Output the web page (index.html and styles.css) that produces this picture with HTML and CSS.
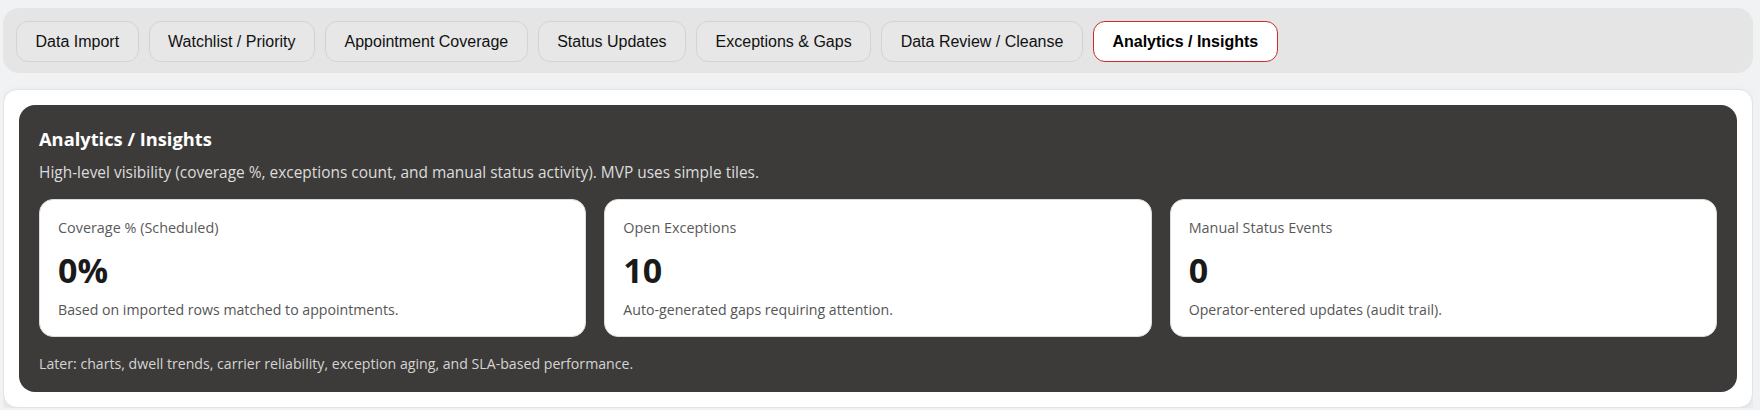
FILE: index.html
```html
<!DOCTYPE html>
<html lang="en">
<head>
<meta charset="utf-8">
<title>Analytics / Insights</title>
<link rel="stylesheet" href="styles.css">
</head>
<body>
  <nav class="tabbar">
    <button class="tab">Data Import</button>
    <button class="tab">Watchlist / Priority</button>
    <button class="tab">Appointment Coverage</button>
    <button class="tab">Status Updates</button>
    <button class="tab">Exceptions &amp; Gaps</button>
    <button class="tab">Data Review / Cleanse</button>
    <button class="tab tab-active">Analytics / Insights</button>
  </nav>
  <main class="panel">
    <section class="dark">
      <h2 class="dark-title">Analytics / Insights</h2>
      <p class="dark-sub">High-level visibility (coverage %, exceptions count, and manual status activity). MVP uses simple tiles.</p>
      <div class="tiles">
        <div class="tile">
          <div class="tile-label">Coverage % (Scheduled)</div>
          <div class="tile-value">0%</div>
          <div class="tile-desc">Based on imported rows matched to appointments.</div>
        </div>
        <div class="tile">
          <div class="tile-label">Open Exceptions</div>
          <div class="tile-value">10</div>
          <div class="tile-desc">Auto-generated gaps requiring attention.</div>
        </div>
        <div class="tile">
          <div class="tile-label">Manual Status Events</div>
          <div class="tile-value">0</div>
          <div class="tile-desc">Operator-entered updates (audit trail).</div>
        </div>
      </div>
      <p class="dark-foot">Later: charts, dwell trends, carrier reliability, exception aging, and SLA-based performance.</p>
    </section>
  </main>
</body>
</html>
```
FILE: styles.css
```css
* { box-sizing: border-box; }

html, body {
  background: #f1f2f4;
}

body {
  margin: 8px 7px 0 3px;
  font-family: "Open Sans", "Noto Sans", sans-serif;
  color: #1a1a1a;
}

.tabbar {
  display: flex;
  gap: 10px;
  background: #e5e5e5;
  border-radius: 16px;
  padding: 13px 13px 11px;
}

.tab {
  font-family: "Liberation Sans", Arial, sans-serif;
  font-size: 16px;
  line-height: 19px;
  color: #111;
  background: #e7e7e7;
  border: 1px solid #d3d3d3;
  border-radius: 12px;
  padding: 10px 18.5px;
  height: 41px;
  cursor: pointer;
}

.tab-active {
  background: #fff;
  border-color: #cc2b2b;
  font-weight: 700;
  color: #000;
}

.panel {
  display: block;
  margin-top: 16px;
  background: #fff;
  border: 1px solid #e2e3e6;
  border-radius: 14px;
  padding: 15px;
  box-shadow: 0 4px 12px rgba(0, 0, 0, 0.08);
}

.dark {
  background: #3d3b39;
  border-radius: 16px;
  padding: 20px 20px 18px;
  color: #fff;
}

.dark-title {
  margin: 0;
  font-size: 18.3px;
  line-height: 28px;
  font-weight: 700;
  color: #fff;
}

.dark-sub {
  margin: 8px 0 0;
  font-size: 15.45px;
  line-height: 22px;
  color: #dcdcdc;
}

.tiles {
  display: grid;
  grid-template-columns: repeat(3, 1fr);
  gap: 18px;
  margin-top: 16px;
}

.tile {
  background: #fff;
  border: 1px solid #dcdcdc;
  border-radius: 14px;
  padding: 18px 18px 16px;
  height: 138px;
}

.tile-label {
  font-size: 14.4px;
  line-height: 20px;
  color: #5a5a5a;
  margin-bottom: 12px;
}

.tile-value {
  font-size: 34px;
  line-height: 40px;
  font-weight: 700;
  color: #1a1a1a;
  margin-bottom: 10px;
}

.tile-desc {
  font-size: 14.15px;
  line-height: 20px;
  color: #555;
}

.dark-foot {
  margin: 16px 0 0;
  font-size: 14.15px;
  line-height: 21px;
  color: #d4d4d4;
}
```
